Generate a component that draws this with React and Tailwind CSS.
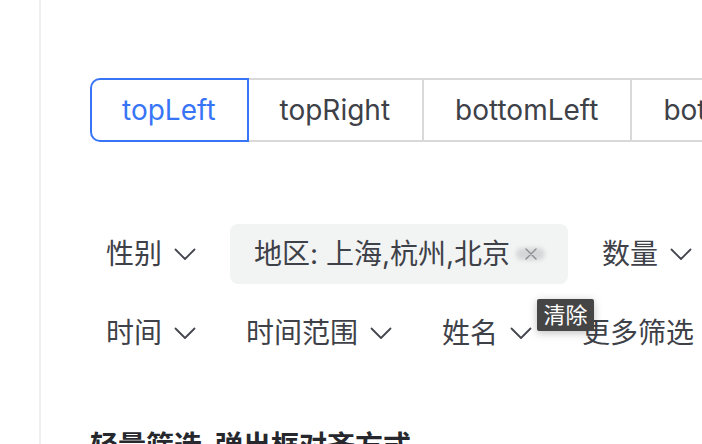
import React from "react";

const Chevron = () => (
  <svg width="22" height="13" viewBox="0 0 22 13" fill="none" className="shrink-0">
    <polyline points="1.5,1.5 11,11 20.5,1.5" stroke="#43464d" strokeWidth="1.8" strokeLinejoin="round" strokeLinecap="round" />
  </svg>
);

const FilterItem = ({ label }) => (
  <div className="flex items-center gap-[12px] h-[60px] px-4 shrink-0 whitespace-nowrap">
    <span>{label}</span>
    <Chevron />
  </div>
);

const App = () => {
  const tabs = [
    { name: "topLeft", active: true },
    { name: "topRight" },
    { name: "bottomLeft" },
    { name: "bottomRight" },
  ];

  return (
    <div
      className="w-[702px] h-[444px] overflow-hidden bg-white text-[#3e4148]"
      style={{ fontFamily: '"Inter", "Noto Sans CJK SC", sans-serif' }}
    >
      <div className="ml-[39px] h-full border-l-2 border-[#f0f0f0] pl-[49px] pt-[78px]">
        {/* Placement tabs */}
        <div className="flex h-[64px] text-[28px] whitespace-nowrap">
          {tabs.map((t) =>
            t.active ? (
              <div
                key={t.name}
                className="flex items-center pl-[30px] pr-[31px] border-2 border-[#3875f6] rounded-l-[10px] text-[#3875f6] shrink-0"
              >
                {t.name}
              </div>
            ) : (
              <div
                key={t.name}
                className="flex items-center pl-[31px] pr-[32px] border-y-2 border-r-2 border-[#d9d9d9] shrink-0"
              >
                {t.name}
              </div>
            )
          )}
        </div>

        {/* Light filter rows */}
        <div className="mt-[82px] flex flex-col gap-[19px] text-[28px]">
          <div className="flex gap-[18px]">
            <FilterItem label="性别" />
            <div className="flex items-center h-[60px] pl-[24px] pr-[23px] bg-[#f2f3f3] rounded-[8px] shrink-0 whitespace-nowrap">
              <span>地区: 上海,杭州,北京</span>
              <span className="relative ml-[6px] w-[29px] h-[12px] flex items-center justify-center">
                <span className="absolute inset-0 rounded-full bg-[#c8cacc] blur-[2px] opacity-70"></span>
                <svg width="14" height="14" viewBox="0 0 14 14" className="relative">
                  <path d="M2 2 L12 12 M12 2 L2 12" stroke="#8a8d92" strokeWidth="1.4" strokeLinecap="round" />
                </svg>
              </span>
            </div>
            <FilterItem label="数量" />
          </div>

          <div className="relative flex gap-[18px]">
            <FilterItem label="时间" />
            <FilterItem label="时间范围" />
            <FilterItem label="姓名" />
            <div className="flex items-center h-[60px] px-4 shrink-0 whitespace-nowrap">更多筛选</div>

            {/* Tooltip over the clear icon */}
            <div className="absolute left-[447px] top-[-4px] w-[57px] h-[32px] flex items-center justify-center bg-[#454545] text-white text-[22px] leading-none rounded-[2px] shadow-[0_2px_8px_rgba(0,0,0,0.25)]">
              清除
            </div>
          </div>
        </div>

        <h2 className="mt-[63px] text-[28px] font-bold text-[#26282d] whitespace-nowrap leading-[40px]">
          轻量筛选-弹出框对齐方式
        </h2>
      </div>
    </div>
  );
};

export default App;
